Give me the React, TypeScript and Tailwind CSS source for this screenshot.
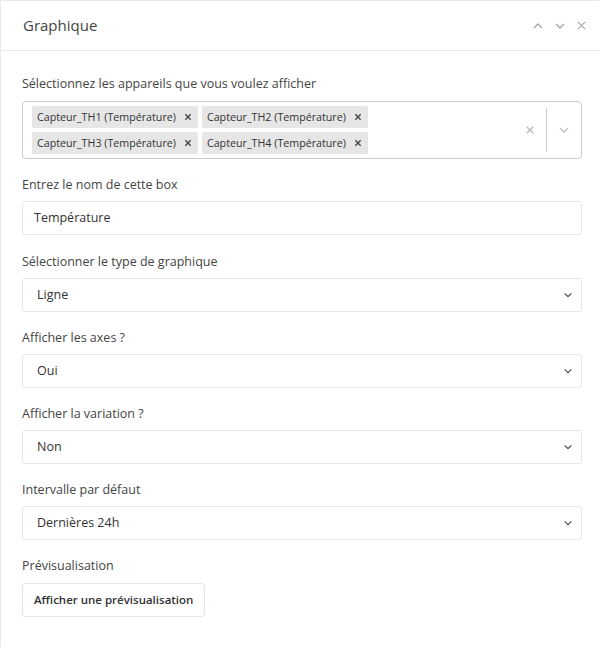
import React from 'react'

const font = { fontFamily: '"Open Sans", "Noto Sans", sans-serif' }

const Chevron = ({ up = false, className = '' }: { up?: boolean; className?: string }) => (
  <svg viewBox="0 0 12 12" className={className} fill="none" stroke="currentColor" strokeWidth="1.3">
    <path d={up ? 'M2 8 L6 4 L10 8' : 'M2 4 L6 8 L10 4'} />
  </svg>
)

const Cross = ({ className = '', w = 1.3 }: { className?: string; w?: number }) => (
  <svg viewBox="0 0 12 12" className={className} fill="none" stroke="currentColor" strokeWidth={w}>
    <path d="M2 2 L10 10 M10 2 L2 10" />
  </svg>
)

const Chip = ({ label }: { label: string }) => (
  <div className="flex h-[22px] items-center rounded-[2px] bg-[#e6e6e6] pl-[5px] pr-[6px] text-[10.7px] text-[#333]">
    <span>{label}</span>
    <Cross className="ml-[8px] h-[8px] w-[8px] text-[#444]" w={2} />
  </div>
)

const SelectField = ({ label, value }: { label: string; value: string }) => (
  <div>
    <div className="mb-[7px] text-[12.5px] leading-[18px] text-[#444]">{label}</div>
    <div className="flex h-[34px] items-center justify-between rounded-[3px] border border-[#e3e6ea] bg-white pl-[14px] pr-[8px] text-[12.5px] text-[#333]">
      <span>{value}</span>
      <Chevron className="h-[10px] w-[10px] text-[#444]" />
    </div>
  </div>
)

export default function App() {
  return (
    <div style={font} className="h-[647px] w-[599px] border-l border-t border-[#e8eaee] bg-white">
      <div className="flex h-[50px] items-center justify-between border-b border-[#e3e6ea] pl-[22px] pr-[12px]">
        <h2 className="text-[15px] text-[#444]">Graphique</h2>
        <div className="flex items-center gap-[10px] text-[#a0a4ac]">
          <Chevron up className="h-[12px] w-[12px]" />
          <Chevron className="h-[12px] w-[12px]" />
          <Cross className="h-[11px] w-[11px]" w={1.2} />
        </div>
      </div>

      <div className="flex flex-col gap-[17px] pl-[21px] pr-[17px] pt-[24px]">
        <div>
          <div className="mb-[8px] text-[12.5px] leading-[18px] text-[#444]">
            Sélectionnez les appareils que vous voulez afficher
          </div>
          <div className="flex h-[58px] items-stretch rounded-[4px] border border-[#cccccc] bg-white">
            <div className="flex flex-1 flex-wrap content-center gap-x-[4px] gap-y-[4px] pl-[9px]">
              <Chip label="Capteur_TH1 (Température)" />
              <Chip label="Capteur_TH2 (Température)" />
              <Chip label="Capteur_TH3 (Température)" />
              <Chip label="Capteur_TH4 (Température)" />
            </div>
            <div className="flex items-center">
              <Cross className="mr-[11px] h-[10px] w-[10px] text-[#bdbdbd]" w={1.8} />
              <div className="h-[44px] w-px bg-[#cccccc]" />
              <Chevron className="mx-[11px] h-[12px] w-[12px] text-[#bdbdbd]" />
            </div>
          </div>
        </div>

        <div className="mb-px">
          <div className="mb-[7px] text-[12.5px] leading-[18px] text-[#444]">Entrez le nom de cette box</div>
          <div className="flex h-[34px] items-center rounded-[3px] border border-[#e3e6ea] bg-white pl-[11px] text-[12.5px] text-[#333]">
            Température
          </div>
        </div>

        <SelectField label="Sélectionner le type de graphique" value="Ligne" />
        <SelectField label="Afficher les axes ?" value="Oui" />
        <SelectField label="Afficher la variation ?" value="Non" />
        <SelectField label="Intervalle par défaut" value="Dernières 24h" />

        <div>
          <div className="mb-[8px] text-[12.5px] leading-[18px] text-[#444]">Prévisualisation</div>
          <button className="h-[34px] rounded-[3px] border border-[#e3e6ea] bg-white px-[11px] text-[11.5px] font-semibold text-[#333]">
            Afficher une prévisualisation
          </button>
        </div>
      </div>
    </div>
  )
}
